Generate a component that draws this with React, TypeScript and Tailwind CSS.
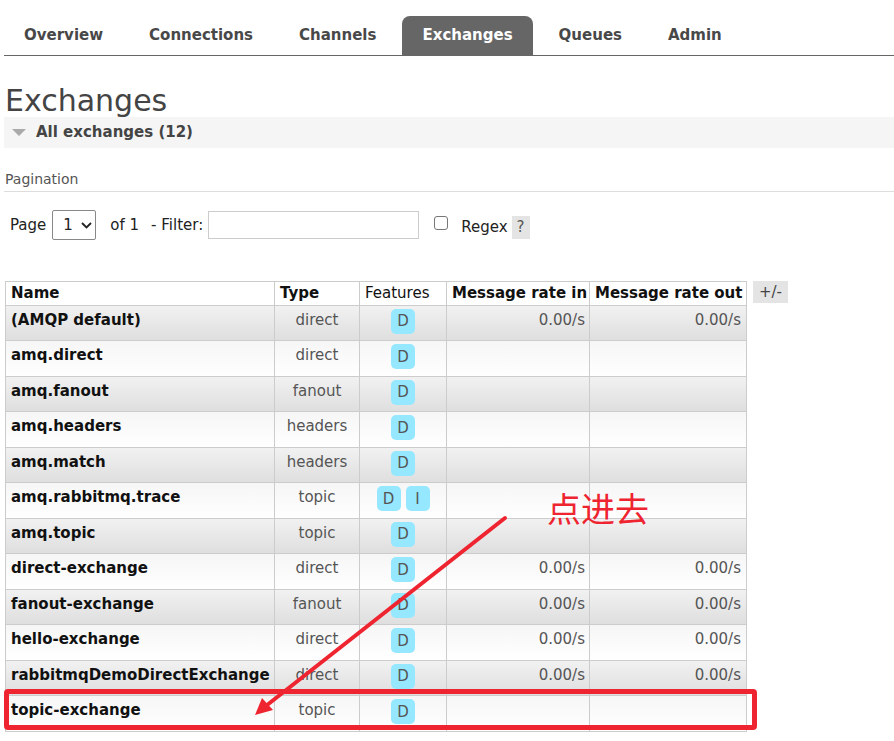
import React from "react";

const rows: { name: string; type: string; feats: string[]; inRate?: string; outRate?: string }[] = [
  { name: "(AMQP default)", type: "direct", feats: ["D"], inRate: "0.00/s", outRate: "0.00/s" },
  { name: "amq.direct", type: "direct", feats: ["D"] },
  { name: "amq.fanout", type: "fanout", feats: ["D"] },
  { name: "amq.headers", type: "headers", feats: ["D"] },
  { name: "amq.match", type: "headers", feats: ["D"] },
  { name: "amq.rabbitmq.trace", type: "topic", feats: ["D", "I"] },
  { name: "amq.topic", type: "topic", feats: ["D"] },
  { name: "direct-exchange", type: "direct", feats: ["D"], inRate: "0.00/s", outRate: "0.00/s" },
  { name: "fanout-exchange", type: "fanout", feats: ["D"], inRate: "0.00/s", outRate: "0.00/s" },
  { name: "hello-exchange", type: "direct", feats: ["D"], inRate: "0.00/s", outRate: "0.00/s" },
  { name: "rabbitmqDemoDirectExchange", type: "direct", feats: ["D"], inRate: "0.00/s", outRate: "0.00/s" },
  { name: "topic-exchange", type: "topic", feats: ["D"] },
];

const tabs = ["Overview", "Connections", "Channels", "Exchanges", "Queues", "Admin"];

export default function App() {
  return (
    <div
      className="relative w-[894px] h-[741px] overflow-hidden bg-white text-[#444]"
      style={{ fontFamily: '"DejaVu Sans", Verdana, sans-serif' }}
    >
      {/* Tabs */}
      <div className="pt-[16px] pl-[4px]">
        <div className="flex gap-[6px] border-b border-[#666] h-[40px]">
          {tabs.map((t) => (
            <div
              key={t}
              className={
                "px-[20px] h-[39px] flex items-center text-[15px] font-bold rounded-t-[8px] " +
                (t === "Exchanges" ? "bg-[#666] text-white" : "text-[#484848]")
              }
            >
              {t}
            </div>
          ))}
        </div>
      </div>

      {/* Title */}
      <h1 className="pl-[5px] mt-[28px] text-[30px] leading-[34px] text-[#444] font-normal">Exchanges</h1>

      {/* Section header */}
      <div className="ml-[4px] mt-[-1px] h-[31px] bg-[#f5f5f5] flex items-center">
        <svg width="14" height="8" viewBox="0 0 14 8" className="ml-[8px] mr-[10px]">
          <polygon points="0,0 14,0 7,7" fill="#aaa" />
        </svg>
        <span className="text-[15px] font-bold text-[#444]">All exchanges (12)</span>
      </div>

      {/* Pagination */}
      <div className="ml-[4px] mt-[23px] border-b border-[#ddd] pb-[3px] text-[14px] text-[#555] pl-[1px] leading-[17px]">
        Pagination
      </div>

      <div className="flex items-center mt-[18px] pl-[10px] text-[15px] text-[#222]">
        <span>Page</span>
        <div className="ml-[6px] w-[44px] h-[30px] border border-[#888] rounded-[2px] flex items-center pl-[10px] gap-[8px]">
          <span>1</span>
          <svg width="11" height="7" viewBox="0 0 11 7">
            <polyline points="1,1 5.5,5.5 10,1" fill="none" stroke="#222" strokeWidth="1.8" />
          </svg>
        </div>
        <span className="ml-[14px]">of 1</span>
        <span className="ml-[12px]">- Filter:</span>
        <div className="ml-[5px] w-[211px] h-[28px] border border-[#ccc]" />
        <div className="ml-[15px] w-[14px] h-[14px] border border-[#777] rounded-[3px] -mt-[4px]" />
        <span className="ml-[13px] mt-[4px]">Regex</span>
        <span className="ml-[4px] mt-[4px] w-[18px] h-[23px] bg-[#e4e4e4] flex items-center justify-center text-[#555]">?</span>
      </div>

      {/* Table */}
      <div className="flex items-start mt-[41px] pl-[5px]">
        <table className="border-collapse border border-[#ccc] text-[15px] table-fixed w-[741px]">
          <colgroup>
            <col className="w-[269px]" />
            <col className="w-[85px]" />
            <col className="w-[87px]" />
            <col className="w-[143px]" />
            <col className="w-[157px]" />
          </colgroup>
          <thead>
            <tr className="h-[23px] bg-white text-[#111]">
              <th className="border border-[#ccc] text-left font-bold px-[5px] py-0 leading-[20px]">Name</th>
              <th className="border border-[#ccc] text-left font-bold px-[5px] py-0">Type</th>
              <th className="border border-[#ccc] text-left font-normal px-[5px] py-0">Features</th>
              <th className="border border-[#ccc] text-left font-bold px-[5px] py-0 whitespace-nowrap">Message rate in</th>
              <th className="border border-[#ccc] text-left font-bold px-[5px] py-0 whitespace-nowrap">Message rate out</th>
            </tr>
          </thead>
          <tbody>
            {rows.map((r, i) => (
              <tr
                key={r.name}
                className={
                  "h-[35.5px] " +
                  (i % 2 === 0
                    ? "bg-gradient-to-b from-[#f2f2f2] to-[#dedede]"
                    : "bg-gradient-to-b from-[#f6f6f6] to-[#ffffff]")
                }
              >
                <td className="border border-[#ccc] align-top px-[5px] pt-[3px] font-bold text-[#111] whitespace-nowrap">
                  {r.name}
                </td>
                <td className="border border-[#ccc] align-top text-center pt-[3px] text-[#555]">{r.type}</td>
                <td className="border border-[#ccc] align-top pt-[3px]">
                  <div className="flex justify-center gap-[5px]">
                    {r.feats.map((f) => (
                      <span
                        key={f}
                        className="w-[24px] h-[25px] rounded-[5px] bg-[#95e8ff] text-[#555] flex items-center justify-center pt-[1px]"
                      >
                        {f}
                      </span>
                    ))}
                  </div>
                </td>
                <td className="border border-[#ccc] align-top text-right pr-[4px] pt-[3px] text-[#555]">{r.inRate ?? ""}</td>
                <td className="border border-[#ccc] align-top text-right pr-[5px] pt-[3px] text-[#555]">{r.outRate ?? ""}</td>
              </tr>
            ))}
          </tbody>
        </table>
        <span className="ml-[6px] w-[35px] h-[22px] bg-[#e4e4e4] text-[15px] text-[#444] flex items-center justify-center">
          +/-
        </span>
      </div>

      {/* Red annotations */}
      <div
        className="absolute left-[547px] top-[488px] text-[34px] leading-[40px] text-[#ee2530]"
        style={{ fontFamily: '"Noto Sans CJK SC", sans-serif' }}
      >
        点进去
      </div>
      <svg className="absolute left-0 top-0 pointer-events-none" width="894" height="741">
        <line x1="505" y1="518" x2="262" y2="709" stroke="#ee2530" strokeWidth="4" strokeLinecap="round" />
        <polygon points="255,715 262,698 273,710" fill="#ee2530" />
        <rect x="6.5" y="691.5" width="748" height="36" rx="1.5" fill="none" stroke="#ee2530" strokeWidth="5" />
      </svg>
    </div>
  );
}
